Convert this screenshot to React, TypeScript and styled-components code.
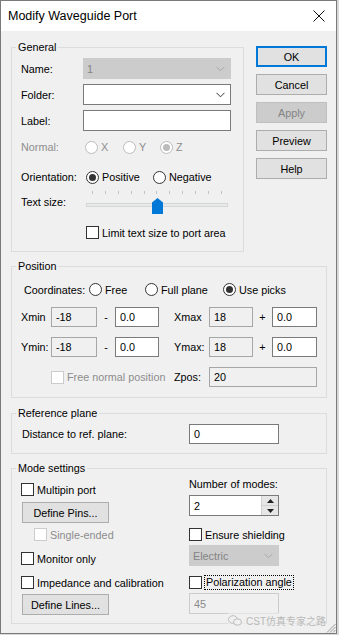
import React from "react";
import styled, { createGlobalStyle } from "styled-components";

const Global = createGlobalStyle`
  html, body { margin: 0; padding: 0; background: #d9d9d9; }
  body { font-family: "Liberation Sans", Arial, sans-serif; font-size: 10.8px; color: #000; }
  #root { width: 339px; height: 635px; }
`;

const Window = styled.div`
  position: relative;
  width: 337px;
  height: 634px;
  box-sizing: border-box;
  border: 1px solid #7a7a7a;
  background: #f0f0f0;
  display: flex;
  flex-direction: column;
  overflow: hidden;
`;

const TitleBar = styled.div`
  height: 30px;
  flex: none;
  background: #ffffff;
  display: flex;
  align-items: center;
  justify-content: space-between;
  padding: 0 11px 0 7px;
`;

const Title = styled.span`
  font-size: 12.5px;
  color: #000;
`;

const Body = styled.div`
  display: flex;
  flex-direction: column;
  padding: 9px 9px 0 10px;
`;

const TopRow = styled.div`
  display: flex;
  gap: 12px;
  align-items: flex-start;
`;

const Group = styled.fieldset<{ $w?: number; $mt?: number }>`
  margin: ${(p) => p.$mt ?? 0}px 0 0 0;
  padding: 0;
  border: 1px solid #dcdcdc;
  min-width: 0;
  box-sizing: border-box;
  width: ${(p) => (p.$w ? `${p.$w}px` : "100%")};
`;

const Legend = styled.legend`
  padding: 0 2px;
  margin-left: 4px;
  line-height: 14px;
  font-size: 10.8px;
`;

const GroupBody = styled.div<{ $pad: string }>`
  display: flex;
  flex-direction: column;
  padding: ${(p) => p.$pad};
`;

const Row = styled.div<{ $mt?: number; $h: number }>`
  display: flex;
  align-items: center;
  margin-top: ${(p) => p.$mt ?? 0}px;
  height: ${(p) => p.$h}px;
`;

const FieldLabel = styled.span<{ $w: number; $disabled?: boolean }>`
  width: ${(p) => p.$w}px;
  flex: none;
  color: ${(p) => (p.$disabled ? "#8d8d8d" : "#000")};
  white-space: nowrap;
`;

const Combo = styled.div<{ $w: number; $disabled?: boolean }>`
  box-sizing: border-box;
  width: ${(p) => p.$w}px;
  height: 21px;
  display: flex;
  align-items: center;
  justify-content: space-between;
  padding: 0 5px 0 3px;
  border: 1px solid ${(p) => (p.$disabled ? "#cccccc" : "#7a7a7a")};
  background: ${(p) => (p.$disabled ? "#cccccc" : "#ffffff")};
  color: ${(p) => (p.$disabled ? "#838383" : "#000")};
`;

const EditBox = styled.div<{ $w?: number; $kind?: "normal" | "readonly" | "disabled"; $h?: number }>`
  box-sizing: border-box;
  width: ${(p) => (p.$w ? `${p.$w}px` : "100%")};
  height: ${(p) => p.$h ?? 20}px;
  display: flex;
  align-items: center;
  padding: 0 4px;
  border: 1px solid
    ${(p) => (p.$kind === "readonly" ? "#a6a6a6" : p.$kind === "disabled" ? "#cccccc" : "#7a7a7a")};
  background: ${(p) => (!p.$kind || p.$kind === "normal" ? "#ffffff" : "#f0f0f0")};
  color: ${(p) => (p.$kind === "disabled" ? "#8a8a8a" : "#000")};
`;

const Options = styled.div<{ $ml?: number }>`
  display: flex;
  align-items: center;
  margin-left: ${(p) => p.$ml ?? 0}px;
`;

const Option = styled.span<{ $w?: number; $disabled?: boolean }>`
  display: inline-flex;
  align-items: center;
  gap: 3px;
  width: ${(p) => (p.$w ? `${p.$w}px` : "auto")};
  flex: none;
  white-space: nowrap;
  color: ${(p) => (p.$disabled ? "#8d8d8d" : "#000")};
`;

const RadioCircle = styled.span<{ $disabled?: boolean; $checked?: boolean }>`
  width: 13px;
  height: 13px;
  box-sizing: border-box;
  border-radius: 50%;
  flex: none;
  border: 1px solid ${(p) => (p.$disabled ? "#bcbcbc" : "#333333")};
  background: #ffffff;
  display: flex;
  align-items: center;
  justify-content: center;
  &::after {
    content: "";
    width: 7px;
    height: 7px;
    border-radius: 50%;
    background: ${(p) => (p.$disabled ? "#bcbcbc" : "#333333")};
    display: ${(p) => (p.$checked ? "block" : "none")};
  }
`;

const Check = styled.span<{ $disabled?: boolean }>`
  width: 13px;
  height: 13px;
  box-sizing: border-box;
  flex: none;
  border: 1px solid ${(p) => (p.$disabled ? "#cccccc" : "#333333")};
  background: #ffffff;
`;

const FocusText = styled.span`
  outline: 1px dotted #000;
  outline-offset: 0;
  padding: 0 1px;
  line-height: 13px;
`;

const Slider = styled.div`
  position: relative;
  width: 142px;
  height: 28px;
  margin-left: 3px;
`;

const Ticks = styled.div`
  position: absolute;
  left: 6px;
  top: 3px;
  width: 130px;
  height: 3px;
  display: flex;
  justify-content: space-between;
`;

const Tick = styled.span`
  width: 1px;
  height: 3px;
  background: #c4c4c4;
`;

const Track = styled.div`
  position: absolute;
  left: 0;
  right: 0;
  top: 15px;
  height: 4px;
  box-sizing: border-box;
  background: #e7eaea;
  border: 1px solid #d6d6d6;
`;

const Thumb = styled.svg`
  position: absolute;
  top: 10px;
  width: 11px;
  height: 16px;
`;

const ButtonColumn = styled.div`
  display: flex;
  flex-direction: column;
  gap: 7px;
  margin-top: 6px;
  width: 71px;
`;

const Button = styled.div<{ $w?: number; $default?: boolean; $disabled?: boolean }>`
  box-sizing: border-box;
  width: ${(p) => (p.$w ? `${p.$w}px` : "100%")};
  height: 21px;
  display: flex;
  align-items: center;
  justify-content: center;
  background: ${(p) => (p.$disabled ? "#cccccc" : "#e1e1e1")};
  border: 1px solid ${(p) => (p.$default ? "#0078d7" : p.$disabled ? "#bfbfbf" : "#adadad")};
  box-shadow: ${(p) => (p.$default ? "inset 0 0 0 1px #0078d7" : "none")};
  color: ${(p) => (p.$disabled ? "#838383" : "#000")};
`;

const CoordGrid = styled.div`
  display: grid;
  grid-template-columns: 30px 46px 18px 44px 15px 35px 44px 19px 45px;
  grid-template-rows: 20px 20px 20px;
  row-gap: 10px;
  align-items: center;
  margin-top: 7px;
`;

const Cell = styled.div<{ $span?: number; $center?: boolean }>`
  grid-column: span ${(p) => p.$span ?? 1};
  display: flex;
  align-items: center;
  justify-content: ${(p) => (p.$center ? "center" : "flex-start")};
  white-space: nowrap;
`;

const ModeGrid = styled.div`
  display: grid;
  grid-template-columns: 168px 90px;
  padding: 0 0 8px 9px;
`;

const Column = styled.div`
  display: flex;
  flex-direction: column;
`;

const Line = styled.div<{ $mt: number; $h: number; $indent?: number }>`
  display: flex;
  align-items: center;
  margin-top: ${(p) => p.$mt}px;
  height: ${(p) => p.$h}px;
  padding-left: ${(p) => p.$indent ?? 0}px;
  white-space: nowrap;
`;

const Spin = styled.div`
  box-sizing: border-box;
  width: 90px;
  height: 21px;
  display: flex;
  border: 1px solid #7a7a7a;
  background: #ffffff;
`;

const SpinText = styled.div`
  flex: 1;
  display: flex;
  align-items: center;
  padding-left: 4px;
`;

const SpinButtons = styled.div`
  width: 16px;
  display: flex;
  flex-direction: column;
  border-left: 1px solid #d0d0d0;
`;

const SpinHalf = styled.div<{ $top?: boolean }>`
  flex: 1;
  display: flex;
  align-items: center;
  justify-content: center;
  background: #e6e6e6;
  border-bottom: ${(p) => (p.$top ? "1px solid #d0d0d0" : "none")};
`;

const Watermark = styled.div`
  position: absolute;
  right: 10px;
  bottom: 5px;
  display: flex;
  align-items: center;
  gap: 4px;
  font-family: "Liberation Sans", "Noto Sans CJK SC", sans-serif;
  font-size: 10px;
  color: #b9b9b9;
  background: rgba(240, 240, 240, 0.6);
`;

const Grip = styled.svg`
  position: absolute;
  right: 0;
  bottom: 0;
  width: 10px;
  height: 10px;
`;

const Chevron = ({ color }: { color: string }) => (
  <svg width="9" height="6" viewBox="0 0 9 6">
    <path d="M0.5 0.8 L4.5 4.8 L8.5 0.8" fill="none" stroke={color} strokeWidth="1" />
  </svg>
);

const Radio = ({ label, w, checked, disabled }: { label: string; w?: number; checked?: boolean; disabled?: boolean }) => (
  <Option $w={w} $disabled={disabled}>
    <RadioCircle $checked={checked} $disabled={disabled} />
    {label}
  </Option>
);

const CheckOption = ({ label, disabled, focus }: { label: string; disabled?: boolean; focus?: boolean }) => (
  <Option $disabled={disabled}>
    <Check $disabled={disabled} />
    {focus ? <FocusText>{label}</FocusText> : label}
  </Option>
);

export default function App() {
  const sliderValue = 5;
  const thumbLeft = 6 + sliderValue * 12.9 - 5;
  return (
    <>
      <Global />
      <Window>
        <TitleBar>
          <Title>Modify Waveguide Port</Title>
          <svg width="12" height="12" viewBox="0 0 12 12">
            <path d="M0.5 0.5 L11.5 11.5 M11.5 0.5 L0.5 11.5" stroke="#111" strokeWidth="1" />
          </svg>
        </TitleBar>
        <Body>
          <TopRow>
            <Group $w={233}>
              <Legend>General</Legend>
              <GroupBody $pad="4px 11px 10px 9px">
                <Row $h={21}>
                  <FieldLabel $w={62}>Name:</FieldLabel>
                  <Combo $w={148} $disabled>
                    1
                    <Chevron color="#a8a8a8" />
                  </Combo>
                </Row>
                <Row $mt={5} $h={21}>
                  <FieldLabel $w={62}>Folder:</FieldLabel>
                  <Combo $w={148}>
                    <span />
                    <Chevron color="#333" />
                  </Combo>
                </Row>
                <Row $mt={5} $h={21}>
                  <FieldLabel $w={62}>Label:</FieldLabel>
                  <EditBox $w={148} $h={21} />
                </Row>
                <Row $mt={5} $h={22}>
                  <FieldLabel $w={62} $disabled>
                    Normal:
                  </FieldLabel>
                  <Options $ml={2}>
                    <Radio label="X" w={38} disabled />
                    <Radio label="Y" w={37} disabled />
                    <Radio label="Z" checked disabled />
                  </Options>
                </Row>
                <Row $mt={8} $h={22}>
                  <FieldLabel $w={62}>Orientation:</FieldLabel>
                  <Options $ml={3}>
                    <Radio label="Positive" w={67} checked />
                    <Radio label="Negative" />
                  </Options>
                </Row>
                <Row $h={28}>
                  <FieldLabel $w={62}>Text size:</FieldLabel>
                  <Slider>
                    <Ticks>
                      {Array.from({ length: 11 }).map((_, i) => (
                        <Tick key={i} />
                      ))}
                    </Ticks>
                    <Track />
                    <Thumb viewBox="0 0 11 16" style={{ left: thumbLeft }}>
                      <path d="M0 4.5 L5.5 0 L11 4.5 L11 16 L0 16 Z" fill="#0078d7" />
                    </Thumb>
                  </Slider>
                </Row>
                <Row $mt={8} $h={17}>
                  <FieldLabel $w={65} />
                  <CheckOption label="Limit text size to port area" />
                </Row>
              </GroupBody>
            </Group>
            <ButtonColumn>
              <Button $default>OK</Button>
              <Button>Cancel</Button>
              <Button $disabled>Apply</Button>
              <Button>Preview</Button>
              <Button>Help</Button>
            </ButtonColumn>
          </TopRow>

          <Group $mt={7}>
            <Legend>Position</Legend>
            <GroupBody $pad="6px 8px 10px 9px">
              <Row $h={21}>
                <FieldLabel $w={68}>&nbsp;Coordinates:</FieldLabel>
                <Options>
                  <Radio label="Free" w={56} />
                  <Radio label="Full plane" w={78} />
                  <Radio label="Use picks" checked />
                </Options>
              </Row>
              <CoordGrid>
                <Cell>Xmin</Cell>
                <EditBox $kind="readonly">-18</EditBox>
                <Cell $center>-</Cell>
                <EditBox>0.0</EditBox>
                <Cell />
                <Cell>Xmax</Cell>
                <EditBox $kind="readonly">18</EditBox>
                <Cell $center>+</Cell>
                <EditBox>0.0</EditBox>

                <Cell>Ymin:</Cell>
                <EditBox $kind="readonly">-18</EditBox>
                <Cell $center>-</Cell>
                <EditBox>0.0</EditBox>
                <Cell />
                <Cell>Ymax:</Cell>
                <EditBox $kind="readonly">18</EditBox>
                <Cell $center>+</Cell>
                <EditBox>0.0</EditBox>

                <Cell />
                <Cell $span={4}>
                  <CheckOption label="Free normal position" disabled />
                </Cell>
                <Cell>Zpos:</Cell>
                <Cell $span={3}>
                  <EditBox $kind="readonly">20</EditBox>
                </Cell>
              </CoordGrid>
            </GroupBody>
          </Group>

          <Group $mt={8}>
            <Legend>Reference plane</Legend>
            <GroupBody $pad="4px 8px 9px 10px">
              <Row $h={20}>
                <FieldLabel $w={167}>Distance to ref. plane:</FieldLabel>
                <EditBox $w={90}>0</EditBox>
              </Row>
            </GroupBody>
          </Group>

          <Group $mt={7}>
            <Legend>Mode settings</Legend>
            <ModeGrid>
              <Column>
                <Line $mt={7} $h={15}>
                  <CheckOption label="Multipin port" />
                </Line>
                <Line $mt={5} $h={21} $indent={1}>
                  <Button $w={87}>Define Pins...</Button>
                </Line>
                <Line $mt={4} $h={15} $indent={13}>
                  <CheckOption label="Single-ended" disabled />
                </Line>
                <Line $mt={9} $h={15}>
                  <CheckOption label="Monitor only" />
                </Line>
                <Line $mt={9} $h={15}>
                  <CheckOption label="Impedance and calibration" />
                </Line>
                <Line $mt={4} $h={21} $indent={1}>
                  <Button $w={87}>Define Lines...</Button>
                </Line>
              </Column>
              <Column>
                <Line $mt={2} $h={14}>
                  Number of modes:
                </Line>
                <Line $mt={4} $h={21}>
                  <Spin>
                    <SpinText>2</SpinText>
                    <SpinButtons>
                      <SpinHalf $top>
                        <svg width="7" height="4" viewBox="0 0 7 4">
                          <path d="M0 4 L3.5 0 L7 4 Z" fill="#222" />
                        </svg>
                      </SpinHalf>
                      <SpinHalf>
                        <svg width="7" height="4" viewBox="0 0 7 4">
                          <path d="M0 0 L3.5 4 L7 0 Z" fill="#222" />
                        </svg>
                      </SpinHalf>
                    </SpinButtons>
                  </Spin>
                </Line>
                <Line $mt={11} $h={15}>
                  <CheckOption label="Ensure shielding" />
                </Line>
                <Line $mt={3} $h={21}>
                  <Combo $w={90} $disabled>
                    Electric
                    <Chevron color="#a8a8a8" />
                  </Combo>
                </Line>
                <Line $mt={9} $h={15}>
                  <CheckOption label="Polarization angle" focus />
                </Line>
                <Line $mt={3} $h={21}>
                  <EditBox $w={90} $h={21} $kind="disabled">
                    45
                  </EditBox>
                </Line>
              </Column>
            </ModeGrid>
          </Group>
        </Body>
        <Watermark>
          <svg width="14" height="11" viewBox="0 0 14 11">
            <ellipse cx="5" cy="4.5" rx="4.5" ry="3.8" fill="none" stroke="#bdbdbd" strokeWidth="1" />
            <ellipse cx="9.5" cy="7" rx="4" ry="3.2" fill="#f0f0f0" stroke="#bdbdbd" strokeWidth="1" />
          </svg>
          CST仿真专家之路
        </Watermark>
        <Grip viewBox="0 0 10 10">
          <path d="M9.5 1 L1 9.5 M9.5 4 L4 9.5 M9.5 7 L7 9.5" stroke="#9a9a9a" strokeWidth="1" />
        </Grip>
      </Window>
    </>
  );
}
